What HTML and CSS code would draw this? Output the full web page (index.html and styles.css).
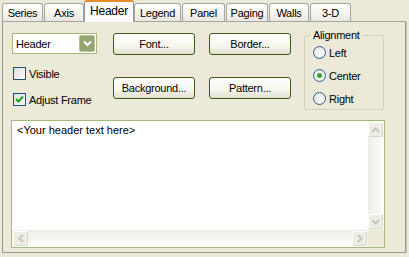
FILE: index.html
```html
<!DOCTYPE html>
<html lang="en">
<head>
    <meta charset="UTF-8">
    <title>Header</title>
    <link rel="stylesheet" href="styles.css">
</head>
<body>
    <div class="tabs">
        <div class="tab t-series">Series</div>
        <div class="tab t-axis">Axis</div>
        <div class="tab active t-header">Header</div>
        <div class="tab t-legend">Legend</div>
        <div class="tab t-panel">Panel</div>
        <div class="tab t-paging">Paging</div>
        <div class="tab t-walls">Walls</div>
        <div class="tab t-3d">3-D</div>
    </div>
    <div class="page">
        <div class="controls">
            <div class="col1">
                <div class="combo">
                    <span>Header</span>
                    <div class="drop">
                        <svg width="9" height="7" viewBox="0 0 9 7"><polyline points="1,1.5 4.5,5 8,1.5" fill="none" stroke="#fff" stroke-width="2"/></svg>
                    </div>
                </div>
                <div class="check"><span class="box"></span>Visible</div>
                <div class="check"><span class="box">
                    <svg width="11" height="11" viewBox="0 0 11 11"><polyline points="2,5 4.5,7.5 9,2.5" fill="none" stroke="#21a121" stroke-width="2"/></svg>
                </span>Adjust Frame</div>
            </div>
            <div class="col-btn">
                <div class="btn">Font...</div>
                <div class="btn">Background...</div>
            </div>
            <div class="col-btn col3">
                <div class="btn">Border...</div>
                <div class="btn">Pattern...</div>
            </div>
            <fieldset class="align">
                <legend>Alignment</legend>
                <div class="radios">
                    <div class="radio"><span class="dot"></span>Left</div>
                    <div class="radio"><span class="dot on"></span>Center</div>
                    <div class="radio"><span class="dot"></span>Right</div>
                </div>
            </fieldset>
        </div>
        <div class="memo">
            <div class="memo-text">&lt;Your header text here&gt;</div>
            <div class="vscroll">
                <div class="sbtn">
                    <svg width="9" height="6" viewBox="0 0 9 6"><polyline points="1,5 4.5,1.5 8,5" fill="none" stroke="#c9c7ba" stroke-width="2"/></svg>
                </div>
                <div class="sbtn">
                    <svg width="9" height="6" viewBox="0 0 9 6"><polyline points="1,1 4.5,4.5 8,1" fill="none" stroke="#c9c7ba" stroke-width="2"/></svg>
                </div>
            </div>
            <div class="hscroll">
                <div class="sbtn">
                    <svg width="6" height="9" viewBox="0 0 6 9"><polyline points="5,1 1.5,4.5 5,8" fill="none" stroke="#c9c7ba" stroke-width="2"/></svg>
                </div>
                <div class="sbtn">
                    <svg width="6" height="9" viewBox="0 0 6 9"><polyline points="1,1 4.5,4.5 1,8" fill="none" stroke="#c9c7ba" stroke-width="2"/></svg>
                </div>
            </div>
            <div class="corner"></div>
        </div>
    </div>
</body>
</html>
```

FILE: styles.css
```css
body {
    margin: 0;
    background: #ece9d8;
    font-family: "Liberation Sans", Arial, sans-serif;
    font-size: 11px;
    letter-spacing: -0.25px;
    color: #000;
}

.tabs {
    display: flex;
    align-items: flex-end;
    height: 21px;
    padding-left: 2px;
    position: relative;
    z-index: 2;
}
.tab {
    box-sizing: border-box;
    height: 18px;
    border: 1px solid #a3a6a2;
    border-bottom: none;
    border-radius: 3px 3px 0 0;
    background: linear-gradient(#fefefd, #f4f3ee 60%, #e9e7df);
    text-align: center;
    line-height: 17px;
    padding-top: 1px;
    margin-left: 1px;
}
.tab.active {
    height: 22px;
    margin-bottom: -1px;
    border-color: #919b9c;
    border-top: 2px solid #e68b2c;
    background: #fcfcfe;
    line-height: 16px;
    padding-top: 1px;
    font-size: 12px;
}
.t-series { width: 41px; margin-left: 0; }
.t-axis { width: 40px; }
.t-header { width: 50px; margin-left: 0; }
.t-legend { width: 47px; margin-left: 0; }
.t-panel { width: 43px; }
.t-paging { width: 42px; }
.t-walls { width: 40px; }
.t-3d { width: 41px; }

.page {
    box-sizing: border-box;
    margin-left: 2px;
    width: 404px;
    height: 232px;
    border: 1px solid #919b9c;
    border-top-color: #a3a6a2;
    box-shadow: 1px 1px 0 #c8c6b8;
    background: #ece9d8;
}

.controls {
    display: flex;
    align-items: flex-start;
    padding: 8px 0 0 9px;
}
.col1 {
    width: 85px;
    padding-top: 3px;
}
.combo {
    box-sizing: border-box;
    height: 21px;
    border: 1px solid #a5b97f;
    background: #fff;
    display: flex;
    align-items: center;
    justify-content: space-between;
    padding: 0 1px 0 3px;
}
.drop {
    box-sizing: border-box;
    width: 16px;
    height: 17px;
    background: #96a671;
    border: 1px solid #b6c39b;
    border-radius: 2px;
    display: flex;
    align-items: center;
    justify-content: center;
}
.check {
    display: flex;
    align-items: center;
    height: 13px;
    margin-top: 13px;
    margin-left: 1px;
}
.box {
    box-sizing: border-box;
    width: 13px;
    height: 13px;
    border: 1px solid #1c5180;
    background: linear-gradient(135deg, #dcdcd7, #fff);
    margin-right: 3px;
    display: flex;
    align-items: center;
    justify-content: center;
}

.col-btn {
    width: 82px;
    margin-left: 16px;
    padding-top: 3px;
}
.col3 {
    margin-left: 14px;
}
.btn {
    box-sizing: border-box;
    height: 22px;
    border: 1px solid #3d5a1a;
    border-radius: 3px;
    background: linear-gradient(#ffffff, #f6f5ee 60%, #e2dfcf);
    text-align: center;
    line-height: 20px;
}
.btn + .btn {
    margin-top: 22px;
}

.align {
    box-sizing: border-box;
    width: 80px;
    height: 80px;
    margin: 0 0 0 13px;
    padding: 0 0 0 8px;
    border: 1px solid #d0d0bf;
    border-radius: 3px;
}
.align legend {
    padding: 0 2px;
    margin-left: -2px;
    line-height: 11px;
}
.radios {
    display: flex;
    flex-direction: column;
    gap: 10px;
    padding-top: 5px;
}
.radio {
    display: flex;
    align-items: center;
    height: 13px;
}
.dot {
    box-sizing: border-box;
    width: 13px;
    height: 13px;
    border: 1px solid #2c628b;
    border-radius: 50%;
    background: radial-gradient(circle at 65% 65%, #fff, #dcdcd7);
    margin-right: 3px;
    display: flex;
    align-items: center;
    justify-content: center;
}
.dot.on::after {
    content: "";
    width: 5px;
    height: 5px;
    border-radius: 50%;
    background: #2fa72f;
}

.memo {
    box-sizing: border-box;
    width: 374px;
    height: 128px;
    margin: 10px 0 0 8px;
    border: 1px solid #a5b97f;
    background: #fff;
    display: grid;
    grid-template-columns: 1fr 16px;
    grid-template-rows: 1fr 17px;
}
.memo-text {
    padding: 3px 0 0 5px;
    line-height: 13px;
    letter-spacing: 0;
}
.vscroll {
    background: linear-gradient(90deg, #eeede5, #fdfdfb);
    display: flex;
    flex-direction: column;
    justify-content: space-between;
    padding: 1px 0;
}
.hscroll {
    background: linear-gradient(#eeede5, #fdfdfb);
    display: flex;
    justify-content: space-between;
    padding: 1px 1px 0;
}
.corner {
    background: #ece9d8;
}
.sbtn {
    box-sizing: border-box;
    width: 15px;
    height: 15px;
    border: 1px solid #fff;
    border-right-color: #d8d6c8;
    border-bottom-color: #d8d6c8;
    border-radius: 2px;
    background: #eeede6;
    display: flex;
    align-items: center;
    justify-content: center;
}
```
